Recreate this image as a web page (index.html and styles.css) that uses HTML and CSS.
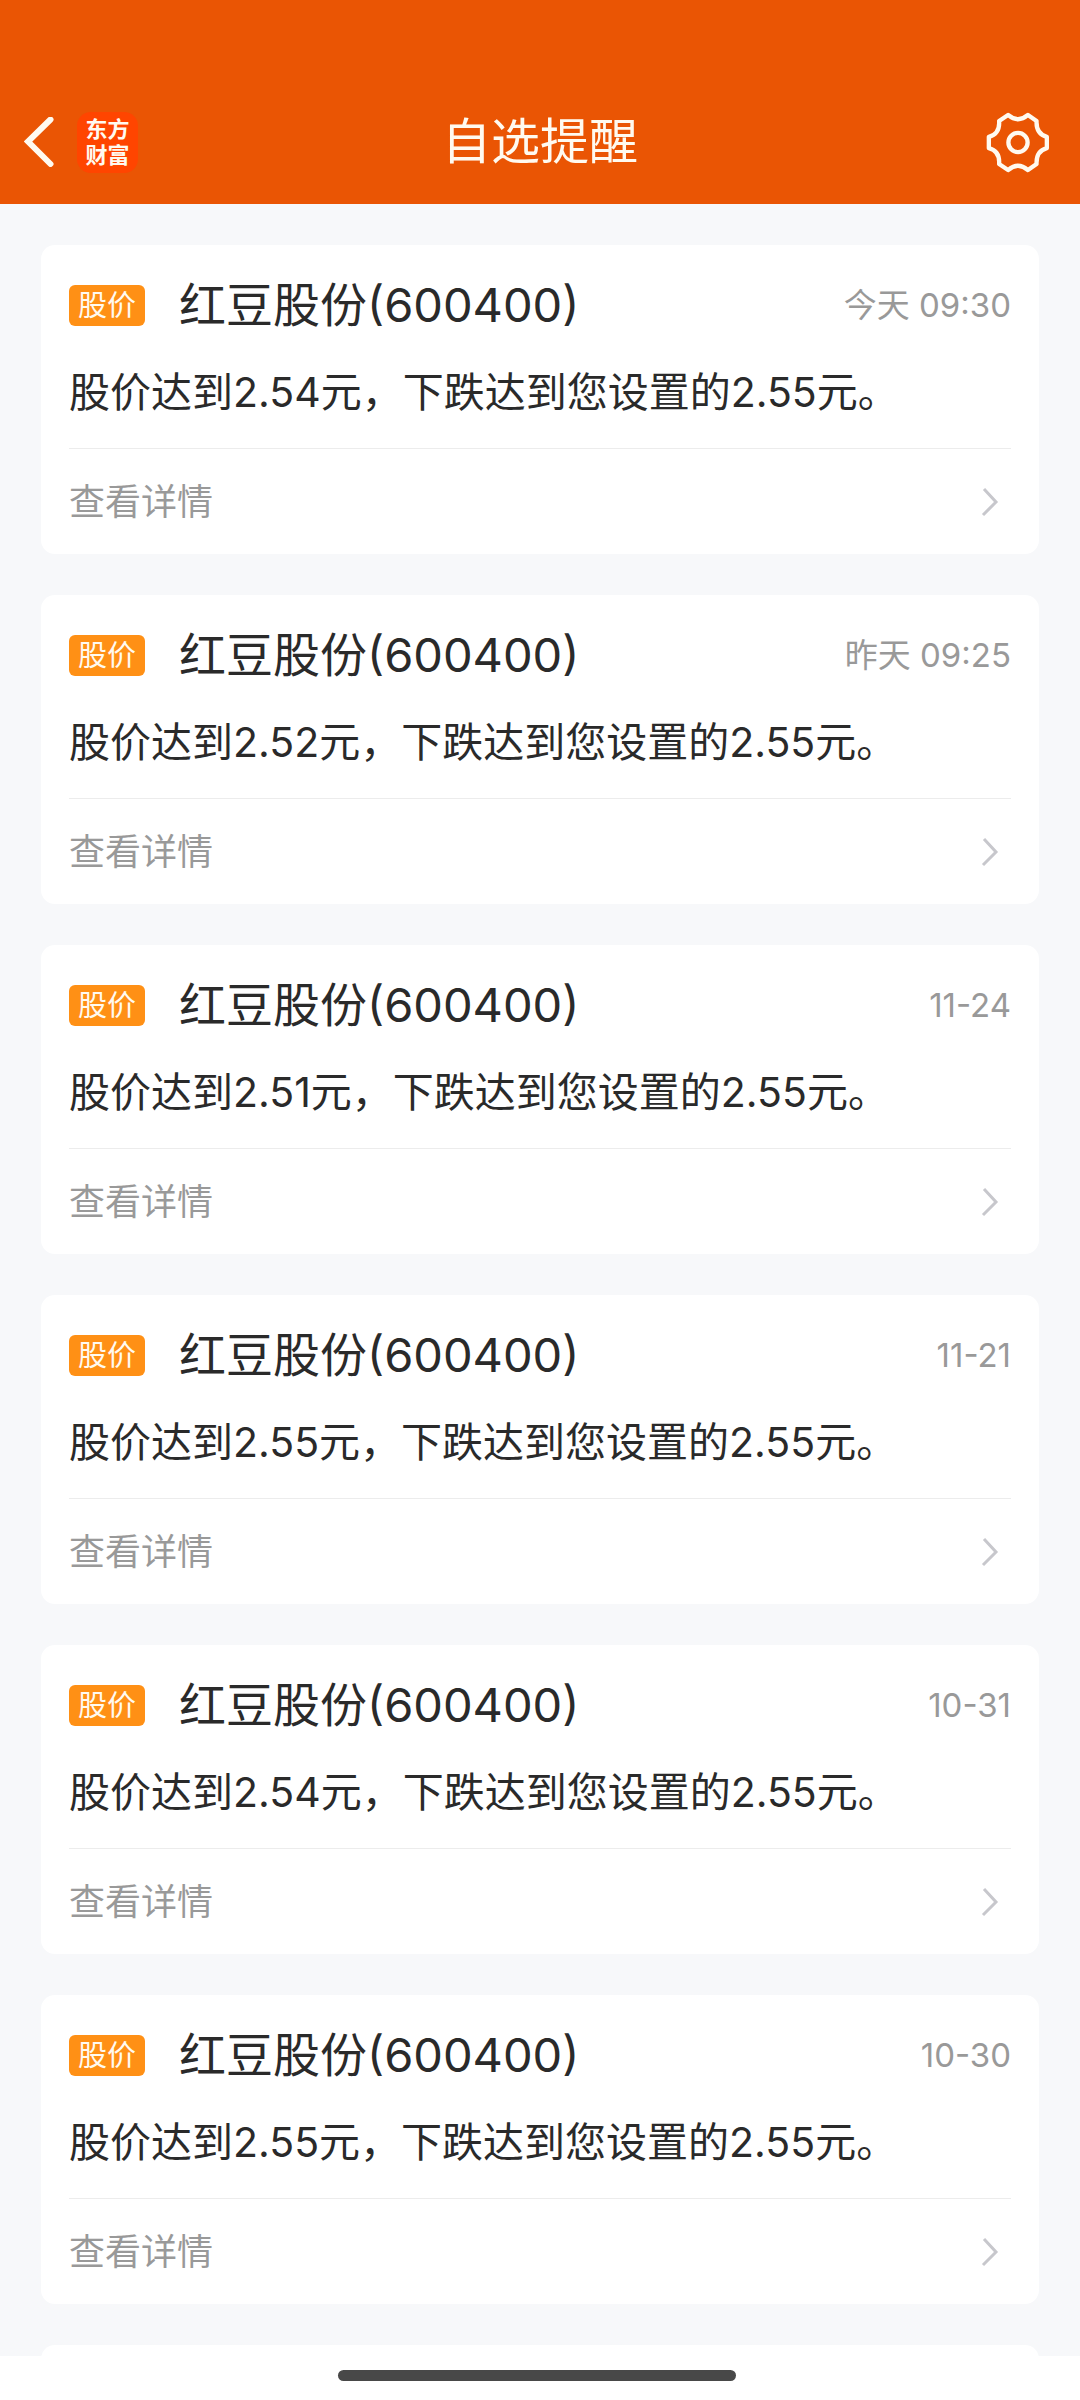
FILE: index.html
```html
<!DOCTYPE html>
<html lang="zh-CN">
<head>
    <meta charset="UTF-8">
    <meta name="viewport" content="width=device-width, initial-scale=1.0">
    <title>自选提醒</title>
    <link rel="stylesheet" href="styles.css">
</head>
<body>
    <header class="top-bar">
        <div class="top-left">
            <button class="icon-btn" type="button" aria-label="返回">
                <svg class="back-icon" viewBox="0 0 30 50">
                    <path d="M26.500 2.500 L4 24.500 L26.500 47"></path>
                </svg>
            </button>
            <div class="app-logo"><span>东方</span><span>财富</span></div>
        </div>
        <h1>自选提醒</h1>
        <div class="top-right">
            <button class="icon-btn" type="button" aria-label="设置">
                <svg class="gear-icon" viewBox="0 0 192 184">
                    <path d="M66 9 Q96 35 126 9 L152 27 Q150 66 183 75 V109 Q150 118 152 157 L126 175 Q96 149 66 175 L39 157 Q42 118 8 109 V75 Q42 66 39 27 Z"></path>
                    <circle cx="96" cy="92" r="29"></circle>
                </svg>
            </button>
        </div>
    </header>

    <main class="alert-list" id="alertList"></main>

    <footer class="nav-area">
        <div class="home-bar"></div>
    </footer>

    <script>
        const alertList = document.getElementById('alertList');

        const alerts = [
            { time: '今天 09:30', price: '2.54' },
            { time: '昨天 09:25', price: '2.52' },
            { time: '11-24', price: '2.51' },
            { time: '11-21', price: '2.55' },
            { time: '10-31', price: '2.54' },
            { time: '10-30', price: '2.55' }
        ];

        function addAlert(item) {
            const card = document.createElement('article');
            card.className = 'card';
            card.innerHTML = `
                <div class="card-head">
                    <span class="tag">股价</span>
                    <h2>红豆股份(600400)</h2>
                    <time>${item.time}</time>
                </div>
                <p class="card-text">股价达到${item.price}元，下跌达到您设置的2.55元。</p>
                <a class="card-link" href="#">
                    <span>查看详情</span>
                    <svg class="arrow-icon" viewBox="0 0 18 30"><path d="M3 2 L15 15 L2 28"></path></svg>
                </a>
            `;
            alertList.appendChild(card);
        }

        alerts.forEach(addAlert);

        // next card, still below the fold
        const nextCard = document.createElement('article');
        nextCard.className = 'card card-next';
        alertList.appendChild(nextCard);
    </script>
</body>
</html>
```

FILE: styles.css
```css
* {
    margin: 0;
    padding: 0;
    box-sizing: border-box;
}

body {
    display: flex;
    flex-direction: column;
    height: 100vh;
    overflow: hidden;
    background: #f7f8fa;
    color: #2a2a2a;
    font-family: Inter, "Noto Sans CJK SC", sans-serif;
}

.top-bar {
    display: grid;
    grid-template-columns: 1fr auto 1fr;
    align-items: center;
    flex-shrink: 0;
    padding: 80px 24px 0;
    height: 204px;
    background: #ea5504;
    color: #fffaf0;
}

.top-bar h1 {
    font-size: 49px;
    line-height: 64px;
    font-weight: 400;
}

.top-left,
.top-right {
    display: flex;
    align-items: center;
}

.top-left {
    gap: 23px;
}

.top-right {
    justify-content: flex-end;
    padding-right: 6px;
}

.icon-btn {
    display: flex;
    border: none;
    background: none;
    color: inherit;
    cursor: pointer;
}

.icon-btn svg,
.arrow-icon {
    fill: none;
    stroke: currentColor;
}

.back-icon {
    width: 30px;
    height: 50px;
    stroke-width: 6;
    stroke-linecap: round;
}

.gear-icon {
    width: 64px;
    height: 61px;
    stroke-width: 13;
    stroke-linejoin: round;
}

.app-logo {
    display: flex;
    flex-direction: column;
    align-items: center;
    justify-content: center;
    width: 61px;
    height: 61px;
    border-radius: 14px;
    background: #ff4500;
    font-size: 22px;
    line-height: 26px;
    font-weight: 700;
}

.alert-list {
    display: flex;
    flex-direction: column;
    gap: 41px;
    flex: 1;
    min-height: 0;
    padding: 41px 41px 0;
    overflow: hidden;
}

.card {
    flex-shrink: 0;
    padding: 28px 28px 0;
    border-radius: 14px;
    background: #fff;
}

.card-next {
    height: 309px;
}

.card-head {
    display: flex;
    align-items: center;
}

.tag {
    padding: 0 9px;
    border-radius: 6px;
    background: #ff9015;
    color: #fffaf0;
    font-size: 29px;
    line-height: 41px;
}

.card-head h2 {
    flex: 1;
    margin-left: 34px;
    font-size: 47px;
    line-height: 64px;
    font-weight: 400;
}

.card-head time {
    color: #999;
    font-size: 33px;
    line-height: 64px;
}

.card-text {
    margin-top: 23px;
    padding-bottom: 24px;
    border-bottom: 1px solid #ececec;
    font-size: 41px;
    line-height: 64px;
}

.card-link {
    display: flex;
    align-items: center;
    justify-content: space-between;
    height: 105px;
    padding-right: 12px;
    color: #999;
    font-size: 36px;
    line-height: 64px;
    text-decoration: none;
}

.arrow-icon {
    width: 18px;
    height: 30px;
    color: #c7c7cc;
    stroke-width: 3;
}

.nav-area {
    display: flex;
    justify-content: center;
    align-items: flex-start;
    flex-shrink: 0;
    height: 44px;
    padding: 14px 6px 0 0;
    background: #fff;
}

.home-bar {
    width: 37%;
    height: 11px;
    border-radius: 6px;
    background: #484848;
}
```
